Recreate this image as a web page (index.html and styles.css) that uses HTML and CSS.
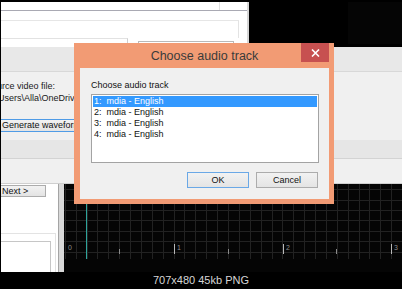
FILE: index.html
```html
<!DOCTYPE html>
<html>
<head>
<meta charset="utf-8">
<link rel="stylesheet" href="styles.css">
</head>
<body>
<div class="screen">
  <div class="shot">
    <div class="top-row">
      <div class="top-panel">
        <div class="tp-strip"><div class="tp-strip-end"></div></div>
        <div class="tp-box"></div>
        <div class="tp-row">
          <div class="tp-field1"></div>
          <div class="tp-field2"></div>
        </div>
      </div>
      <div class="dark-area"><div class="dark-tex"></div></div>
    </div>
    <div class="band">
      <div class="band-head"></div>
      <div class="band-body">
        <div class="lbl lbl-source">Source video file:</div>
        <div class="lbl lbl-path">Users\Alla\OneDrive\Videos</div>
        <div class="win-btn btn-gen">Generate waveform</div>
      </div>
      <div class="band-strip"></div>
      <div class="band-foot"></div>
    </div>
    <div class="bottom-row">
      <div class="left-col">
        <div class="win-btn btn-next">Next &gt;</div>
        <div class="lc-box"><div class="lc-inner"></div></div>
      </div>
      <div class="splitter"></div>
      <div class="wave">
        <svg class="wave-svg" width="338" height="75" viewBox="0 0 338 75">
          <g stroke="#222222" stroke-width="1">
            <line x1="1.5" y1="0" x2="1.5" y2="75"/>
            <line x1="12.5" y1="0" x2="12.5" y2="75"/>
            <line x1="23.5" y1="0" x2="23.5" y2="75"/>
            <line x1="33.5" y1="0" x2="33.5" y2="75"/>
            <line x1="44.5" y1="0" x2="44.5" y2="75"/>
            <line x1="55.5" y1="0" x2="55.5" y2="75"/>
            <line x1="66.5" y1="0" x2="66.5" y2="75"/>
            <line x1="77.5" y1="0" x2="77.5" y2="75"/>
            <line x1="88.5" y1="0" x2="88.5" y2="75"/>
            <line x1="99.5" y1="0" x2="99.5" y2="75"/>
            <line x1="110.5" y1="0" x2="110.5" y2="75"/>
            <line x1="120.5" y1="0" x2="120.5" y2="75"/>
            <line x1="131.5" y1="0" x2="131.5" y2="75"/>
            <line x1="142.5" y1="0" x2="142.5" y2="75"/>
            <line x1="153.5" y1="0" x2="153.5" y2="75"/>
            <line x1="164.5" y1="0" x2="164.5" y2="75"/>
            <line x1="175.5" y1="0" x2="175.5" y2="75"/>
            <line x1="186.5" y1="0" x2="186.5" y2="75"/>
            <line x1="197.5" y1="0" x2="197.5" y2="75"/>
            <line x1="208.5" y1="0" x2="208.5" y2="75"/>
            <line x1="218.5" y1="0" x2="218.5" y2="75"/>
            <line x1="229.5" y1="0" x2="229.5" y2="75"/>
            <line x1="240.5" y1="0" x2="240.5" y2="75"/>
            <line x1="251.5" y1="0" x2="251.5" y2="75"/>
            <line x1="262.5" y1="0" x2="262.5" y2="75"/>
            <line x1="273.5" y1="0" x2="273.5" y2="75"/>
            <line x1="284.5" y1="0" x2="284.5" y2="75"/>
            <line x1="295.5" y1="0" x2="295.5" y2="75"/>
            <line x1="305.5" y1="0" x2="305.5" y2="75"/>
            <line x1="316.5" y1="0" x2="316.5" y2="75"/>
            <line x1="327.5" y1="0" x2="327.5" y2="75"/>
            <line x1="0" y1="5.5" x2="338" y2="5.5"/>
            <line x1="0" y1="16.5" x2="338" y2="16.5"/>
            <line x1="0" y1="26.5" x2="338" y2="26.5"/>
            <line x1="0" y1="36.5" x2="338" y2="36.5"/>
            <line x1="0" y1="47.5" x2="338" y2="47.5"/>
            <line x1="0" y1="57.5" x2="338" y2="57.5"/>
            <line x1="0" y1="68.5" x2="338" y2="68.5"/>
          </g>
          <line x1="22.5" y1="0" x2="22.5" y2="75" stroke="#2ea59c" stroke-width="1"/>
          <g stroke="#b8b8b8" stroke-width="1">
            <line x1="110.5" y1="60" x2="110.5" y2="70"/>
            <line x1="219.5" y1="60" x2="219.5" y2="70"/>
            <line x1="327.5" y1="60" x2="327.5" y2="70"/>
          </g>
          <g stroke="#8a8a8a" stroke-width="1">
            <line x1="55.5" y1="65" x2="55.5" y2="70"/>
            <line x1="164.5" y1="65" x2="164.5" y2="70"/>
            <line x1="272.5" y1="65" x2="272.5" y2="70"/>
          </g>
          <g class="axis-lbl">
            <text x="4" y="66">0</text>
            <text x="113" y="66">1</text>
            <text x="222" y="66">2</text>
            <text x="330" y="66">3</text>
          </g>
        </svg>
      </div>
    </div>
  </div>
  <div class="caption">707x480 45kb PNG</div>

  <div class="dialog">
    <div class="dlg-title">
      <span class="dlg-title-text">Choose audio track</span>
      <div class="dlg-close">
        <svg width="9" height="8" viewBox="0 0 9 8"><path d="M1 0.5 L8 7.5 M8 0.5 L1 7.5" stroke="#ffffff" stroke-width="1.6" fill="none"/></svg>
      </div>
    </div>
    <div class="dlg-body">
      <div class="dlg-label">Choose audio track</div>
      <div class="listbox">
        <div class="lb-row lb-sel">1:  mdia - English</div>
        <div class="lb-row">2:  mdia - English</div>
        <div class="lb-row">3:  mdia - English</div>
        <div class="lb-row">4:  mdia - English</div>
      </div>
      <div class="dlg-buttons">
        <div class="dlg-btn dlg-btn-ok">OK</div>
        <div class="dlg-btn">Cancel</div>
      </div>
    </div>
  </div>
</div>
</body>
</html>
```

FILE: styles.css
```css
html, body {
  margin: 0;
  padding: 0;
}
body {
  width: 402px;
  height: 289px;
  overflow: hidden;
  background: #000;
  font-family: "Liberation Sans", Arial, sans-serif;
}
.screen {
  position: relative;
  width: 402px;
  height: 289px;
  background: #000;
}
.shot {
  height: 272px;
  padding: 2px 0 0 1px;
  box-sizing: border-box;
  display: flex;
  flex-direction: column;
}

/* top area */
.top-row {
  height: 48px;
  display: flex;
}
.top-panel {
  width: 248px;
  background: #fff;
  border-right: 2px solid #d6d6d6;
  box-sizing: border-box;
  display: flex;
  flex-direction: column;
}
.tp-strip {
  height: 8px;
  border-bottom: 1px solid #a9a9b3;
  display: flex;
}
.tp-strip-end {
  margin-left: auto;
  width: 27px;
  border-left: 1px solid #e0e0e0;
}
.tp-box {
  margin-top: 9px;
  width: 237px;
  height: 17px;
  border-top: 1px solid #e6e6e6;
  border-right: 1px solid #e3e3e3;
}
.tp-row {
  flex: 1;
  display: flex;
  gap: 10px;
}
.tp-field1 {
  width: 126px;
  border-top: 1px solid #e2e2e2;
  border-right: 1px solid #cfcfcf;
}
.tp-field2 {
  margin-top: 3px;
  width: 94px;
  border: 1px solid #b9b9b9;
  border-bottom: none;
}
.dark-area {
  flex: 1;
  display: flex;
  justify-content: flex-end;
}
.dark-tex {
  width: 54px;
  height: 42px;
  background: #050505;
}

/* wizard band */
.band {
  height: 147px;
  display: flex;
  flex-direction: column;
  overflow: hidden;
  color: #1a1a1a;
  font-size: 9px;
}
.band-head {
  height: 24px;
  background: #e8e8e8;
  border-bottom: 1px solid #d8d8d8;
}
.band-body {
  height: 68px;
  background: #f0f0f0;
  padding-top: 9px;
  box-sizing: border-box;
}
.lbl {
  line-height: 11px;
  white-space: nowrap;
}
.lbl-source {
  text-indent: -15px;
}
.lbl-path {
  margin-top: 1px;
  text-indent: -3px;
}
.win-btn {
  box-sizing: border-box;
  border: 1px solid #acacac;
  background: linear-gradient(#f2f2f2, #e3e3e3);
  line-height: 11px;
  white-space: nowrap;
  color: #111;
  font-size: 9px;
}
.btn-gen {
  margin-top: 15px;
  margin-left: -4px;
  width: 110px;
  height: 13px;
  padding-left: 4px;
  border-color: #4f9be6;
}
.band-strip {
  height: 18px;
  background: #e6e6e6;
  border-bottom: 1px solid #d3d3d3;
}
.band-foot {
  flex: 1;
  background: #f0f0f0;
  border-bottom: 1px solid #cfcfcf;
}

/* bottom area */
.bottom-row {
  flex: 1;
  display: flex;
}
.left-col {
  width: 57px;
  background: #fff;
  display: flex;
  flex-direction: column;
  overflow: hidden;
}
.btn-next {
  margin-top: 1px;
  margin-left: -3px;
  width: 48px;
  height: 12px;
  padding-left: 3px;
  line-height: 10px;
}
.lc-box {
  margin-top: 36px;
  width: 54px;
  flex: 1;
  border-top: 1px solid #e3e3e3;
  border-right: 1px solid #e3e3e3;
}
.lc-inner {
  margin-top: 7px;
  width: 49px;
  height: 30px;
  border-top: 1px solid #c6c6c6;
  border-right: 1px solid #c6c6c6;
}
.splitter {
  width: 5px;
  background: #d9d9d9;
  border-left: 1px solid #a4a4a4;
}
.wave {
  flex: 1;
  background: #050505;
  overflow: hidden;
}
.wave-svg {
  display: block;
}
.axis-lbl text {
  font-family: "Liberation Sans", Arial, sans-serif;
  font-size: 7px;
  fill: #8e8e8e;
}

/* caption */
.caption {
  height: 17px;
  line-height: 17px;
  text-align: center;
  font-size: 11px;
  color: #d6d6d6;
}

/* dialog */
.dialog {
  position: absolute;
  left: 74px;
  top: 43px;
  width: 260px;
  height: 161px;
  box-sizing: border-box;
  background: #f29b74;
  padding: 0 5px 5px 6px;
  display: flex;
  flex-direction: column;
}
.dlg-title {
  height: 25px;
  display: grid;
  grid-template-columns: 28px 1fr 28px;
}
.dlg-title-text {
  grid-column: 2;
  align-self: center;
  text-align: center;
  font-size: 12.5px;
  color: #3b3b3b;
  white-space: nowrap;
}
.dlg-close {
  grid-column: 3;
  height: 19px;
  background: #c75050;
  display: flex;
  align-items: center;
  justify-content: center;
}
.dlg-close svg {
  display: block;
}
.dlg-body {
  flex: 1;
  background: #f0f0f0;
  padding: 12px 10px 0 11px;
  font-size: 9px;
  color: #111;
}
.dlg-label {
  line-height: 11px;
}
.listbox {
  margin-top: 3px;
  height: 69px;
  box-sizing: border-box;
  border: 1px solid #a3a3a3;
  background: #fff;
  padding: 1px 1px 0 1px;
}
.lb-row {
  height: 11px;
  line-height: 11px;
  padding-left: 1px;
  white-space: pre;
}
.lb-sel {
  background: #3399ff;
  color: #fff;
}
.dlg-buttons {
  margin-top: 9px;
  padding-right: 1px;
  display: flex;
  justify-content: flex-end;
  gap: 7px;
}
.dlg-btn {
  width: 62px;
  height: 16px;
  box-sizing: border-box;
  border: 1px solid #acacac;
  background: linear-gradient(#f2f2f2, #e4e4e4);
  text-align: center;
  line-height: 14px;
  font-size: 9px;
  color: #111;
}
.dlg-btn-ok {
  border-color: #6aa8e6;
}
```
